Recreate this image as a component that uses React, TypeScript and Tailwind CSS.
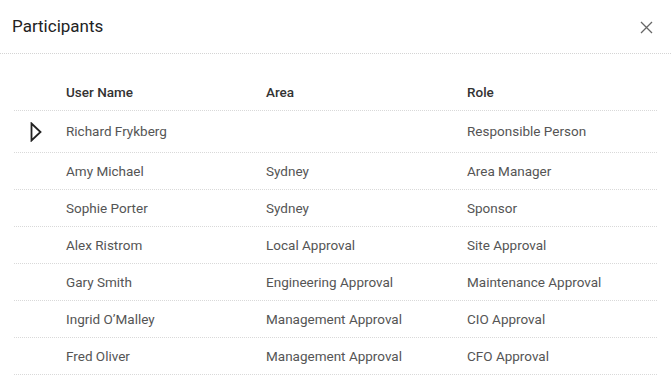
const rows = [
  { name: 'Richard Frykberg', area: '', role: 'Responsible Person', current: true },
  { name: 'Amy Michael', area: 'Sydney', role: 'Area Manager' },
  { name: 'Sophie Porter', area: 'Sydney', role: 'Sponsor' },
  { name: 'Alex Ristrom', area: 'Local Approval', role: 'Site Approval' },
  { name: 'Gary Smith', area: 'Engineering Approval', role: 'Maintenance Approval' },
  { name: 'Ingrid O’Malley', area: 'Management Approval', role: 'CIO Approval' },
  { name: 'Fred Oliver', area: 'Management Approval', role: 'CFO Approval' },
]

export default function App() {
  return (
    <div className="w-[671px] h-[389px] bg-white overflow-hidden" style={{ fontFamily: 'Roboto, "Liberation Sans", sans-serif' }}>
      <div className="flex items-center justify-between h-[54px] pl-3 pr-[18px] pt-[1px] border-b border-dotted border-[#d4d4d4]">
        <h1 className="text-[17px] text-[#222]">Participants</h1>
        <button className="text-[#666]">
          <svg width="13" height="13" viewBox="0 0 13 13" fill="none" stroke="currentColor" strokeWidth="1.3">
            <path d="M1 1L12 12M12 1L1 12" />
          </svg>
        </button>
      </div>

      <div className="ml-[14px] mr-[14px] pt-[20px]">
        <div className="flex items-center h-[37px] border-b border-dotted border-[#d9d9d9] text-[13.5px] font-medium text-[#333]">
          <div className="w-[52px]" />
          <div className="w-[200px]">User Name</div>
          <div className="w-[201px]">Area</div>
          <div className="flex-1">Role</div>
        </div>
        {rows.map((r) => (
          <div
            key={r.name}
            className={`flex items-center border-b border-dotted border-[#d9d9d9] text-[13.5px] text-[#555] ${r.current ? 'h-[42px]' : 'h-[37px]'}`}
          >
            <div className="w-[52px] flex justify-start pl-[16px]">
              {r.current && (
                <svg width="12" height="20" viewBox="0 0 12 20" fill="none" stroke="#222" strokeWidth="1.8" strokeLinejoin="miter">
                  <path d="M1.5 1.5L10.5 10L1.5 18.5Z" />
                </svg>
              )}
            </div>
            <div className="w-[200px]">{r.name}</div>
            <div className="w-[201px]">{r.area}</div>
            <div className="flex-1">{r.role}</div>
          </div>
        ))}
      </div>
    </div>
  )
}
